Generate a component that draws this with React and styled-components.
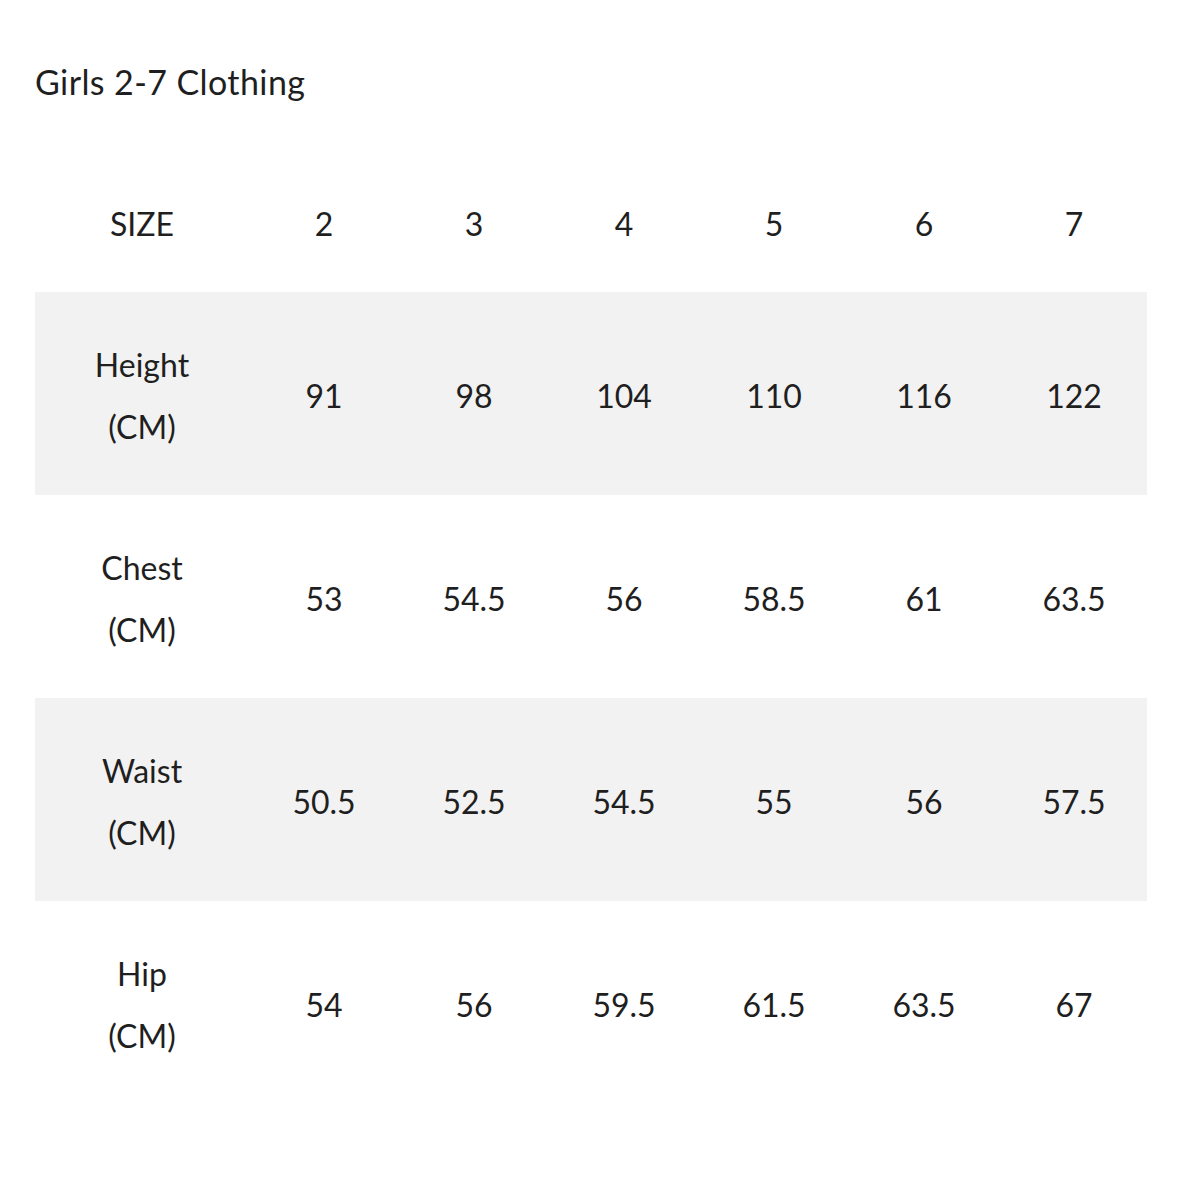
import styled, { createGlobalStyle } from "styled-components";

const GlobalStyle = createGlobalStyle`
  html, body {
    margin: 0;
    padding: 0;
    background: #ffffff;
  }
  body {
    font-family: "Lato", "Noto Sans", sans-serif;
    color: #1f1f1f;
  }
`;

const sizes = ["2", "3", "4", "5", "6", "7"];

const rows = [
  { label: "Height", values: ["91", "98", "104", "110", "116", "122"] },
  { label: "Chest", values: ["53", "54.5", "56", "58.5", "61", "63.5"] },
  { label: "Waist", values: ["50.5", "52.5", "54.5", "55", "56", "57.5"] },
  { label: "Hip", values: ["54", "56", "59.5", "61.5", "63.5", "67"] },
];

const App = () => {
  return (
    <>
      <GlobalStyle />
      <Page>
        <Title>Girls 2-7 Clothing</Title>
        <Table>
          <HeaderRow>
            <Cell>SIZE</Cell>
            {sizes.map((s) => (
              <Cell key={s}>{s}</Cell>
            ))}
          </HeaderRow>
          {rows.map((row, i) => (
            <Row key={row.label} $shaded={i % 2 === 0}>
              <Cell>
                <Label>
                  <span>{row.label}</span>
                  <span>(CM)</span>
                </Label>
              </Cell>
              {row.values.map((v, j) => (
                <Cell key={j}>{v}</Cell>
              ))}
            </Row>
          ))}
        </Table>
      </Page>
    </>
  );
};

export default App;

const Page = styled.div`
  width: 1200px;
  height: 1200px;
  padding: 58px 53px 0 35px;
  box-sizing: border-box;
`;

const Title = styled.h1`
  margin: 0;
  font-size: 34px;
  font-weight: 400;
  line-height: 48px;
  letter-spacing: 0.4px;
`;

const Table = styled.div`
  margin-top: 46px;
  width: 1112px;
  display: flex;
  flex-direction: column;
`;

const HeaderRow = styled.div`
  display: grid;
  grid-template-columns: 214px repeat(6, 150px);
  height: 140px;
  align-items: center;
  font-size: 32px;
`;

const Row = styled.div`
  display: grid;
  grid-template-columns: 214px repeat(6, 150px);
  height: 203px;
  align-items: center;
  font-size: 32px;
  background: ${(p) => (p.$shaded ? "#f2f2f2" : "#ffffff")};
`;

const Cell = styled.div`
  text-align: center;
  line-height: 40px;
  padding-top: 4px;
`;

const Label = styled.div`
  display: flex;
  flex-direction: column;
  align-items: center;
  line-height: 62px;
`;
